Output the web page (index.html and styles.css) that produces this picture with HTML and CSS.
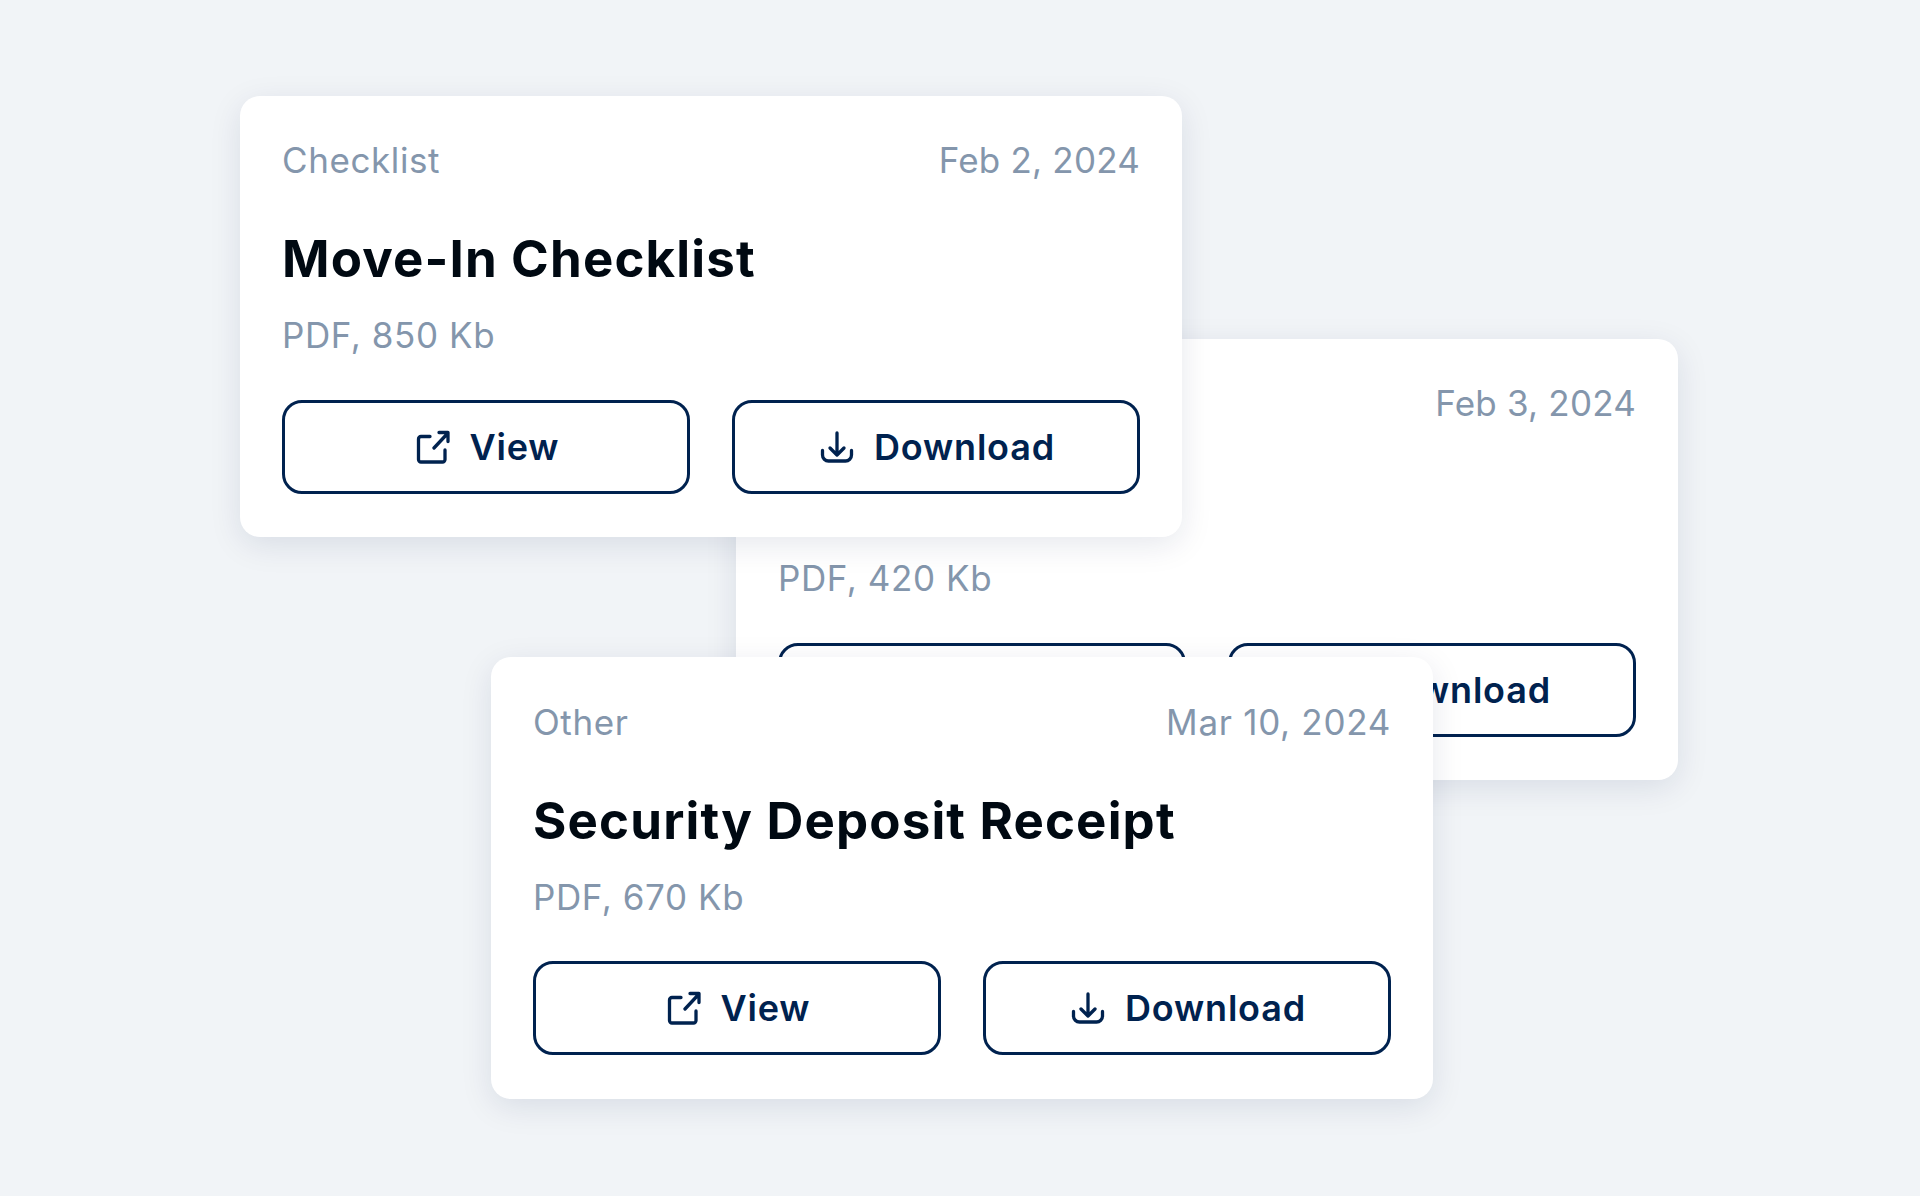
FILE: index.html
```html
<!DOCTYPE html>
<html lang="en">
<head>
<meta charset="utf-8">
<title>Documents</title>
<link rel="stylesheet" href="styles.css">
</head>
<body>
<main class="canvas">
  <article class="card card-two">
    <div class="card-head"><span class="tag">&nbsp;</span><span class="date">Feb 3, 2024</span></div>
    <h2 class="title">&nbsp;</h2>
    <p class="meta">PDF, 420 Kb</p>
    <div class="actions">
      <a class="btn"><svg class="icon" viewBox="0 0 34 34"><path d="M14 6.500H5a2.500 2.500 0 0 0-2.500 2.500v20.500a2.500 2.500 0 0 0 2.500 2.500h21.500a2.500 2.500 0 0 0 2.500-2.500V20"/><path d="M18 18 32 3M23 2.500h9v9"/></svg><span>View</span></a>
      <a class="btn"><svg class="icon" viewBox="0 0 34 34"><path d="M17 3v22M10 18l7 7 7-7"/><path d="M2.500 20.500v4.500a6 6 0 0 0 6 6h17a6 6 0 0 0 6-6v-4.500"/></svg><span>Download</span></a>
    </div>
  </article>
  <article class="card card-one">
    <div class="card-head"><span class="tag">Checklist</span><span class="date">Feb 2, 2024</span></div>
    <h2 class="title">Move-In Checklist</h2>
    <p class="meta">PDF, 850 Kb</p>
    <div class="actions">
      <a class="btn"><svg class="icon" viewBox="0 0 34 34"><path d="M14 6.500H5a2.500 2.500 0 0 0-2.500 2.500v20.500a2.500 2.500 0 0 0 2.500 2.500h21.500a2.500 2.500 0 0 0 2.500-2.500V20"/><path d="M18 18 32 3M23 2.500h9v9"/></svg><span>View</span></a>
      <a class="btn"><svg class="icon" viewBox="0 0 34 34"><path d="M17 3v22M10 18l7 7 7-7"/><path d="M2.500 20.500v4.500a6 6 0 0 0 6 6h17a6 6 0 0 0 6-6v-4.500"/></svg><span>Download</span></a>
    </div>
  </article>
  <article class="card card-three">
    <div class="card-head"><span class="tag">Other</span><span class="date date-wide">Mar 10, 2024</span></div>
    <h2 class="title">Security Deposit Receipt</h2>
    <p class="meta">PDF, 670 Kb</p>
    <div class="actions">
      <a class="btn"><svg class="icon" viewBox="0 0 34 34"><path d="M14 6.500H5a2.500 2.500 0 0 0-2.500 2.500v20.500a2.500 2.500 0 0 0 2.500 2.500h21.500a2.500 2.500 0 0 0 2.500-2.500V20"/><path d="M18 18 32 3M23 2.500h9v9"/></svg><span>View</span></a>
      <a class="btn"><svg class="icon" viewBox="0 0 34 34"><path d="M17 3v22M10 18l7 7 7-7"/><path d="M2.500 20.500v4.500a6 6 0 0 0 6 6h17a6 6 0 0 0 6-6v-4.500"/></svg><span>Download</span></a>
    </div>
  </article>
</main>
</body>
</html>
```
FILE: styles.css
```css
* { box-sizing: border-box; }
html, body { margin: 0; height: 100%; }
body {
  background: #f1f4f7;
  font-family: "Inter", "Liberation Sans", sans-serif;
  overflow: hidden;
}
.canvas { position: relative; width: 1920px; height: 1196px; }
.card {
  position: absolute;
  width: 942px;
  height: 441px;
  padding: 41px 42px 43px;
  background: #fff;
  border-radius: 20px;
  box-shadow: 0 8px 32px rgba(0, 34, 79, 0.1);
  display: flex;
  flex-direction: column;
}
.card-one { left: 240px; top: 96px; }
.card-two { left: 736px; top: 339px; }
.card-three { left: 491px; top: 657px; height: 442px; padding: 42px 42px 44px; }
.card-head {
  display: flex;
  justify-content: space-between;
  align-items: center;
  height: 46px;
  font-size: 35px;
  font-weight: 400;
  color: #8496ac;
}
.tag { letter-spacing: 0.6px; }
.date { letter-spacing: 0.2px; }
.date-wide { letter-spacing: 0.7px; }
.title {
  margin: 44px 0 0;
  font-size: 51px;
  line-height: 64px;
  font-weight: 700;
  letter-spacing: 1.15px;
  color: #000912;
}
.meta {
  margin: 21px 0 0;
  font-size: 35px;
  line-height: 46px;
  letter-spacing: 0.6px;
  color: #8496ac;
}
.actions {
  display: grid;
  grid-template-columns: 408px 408px;
  gap: 42px;
  margin-top: auto;
}
.btn {
  display: flex;
  align-items: center;
  justify-content: center;
  gap: 20px;
  height: 94px;
  padding-left: 3px;
  border: 3px solid #00224f;
  border-radius: 20px;
  color: #00224f;
  font-size: 36px;
  font-weight: 600;
  letter-spacing: 0.8px;
}
.icon {
  width: 34px;
  height: 34px;
  flex: none;
  fill: none;
  stroke: #00224f;
  stroke-width: 3.300;
  stroke-linecap: round;
  stroke-linejoin: round;
}
```
